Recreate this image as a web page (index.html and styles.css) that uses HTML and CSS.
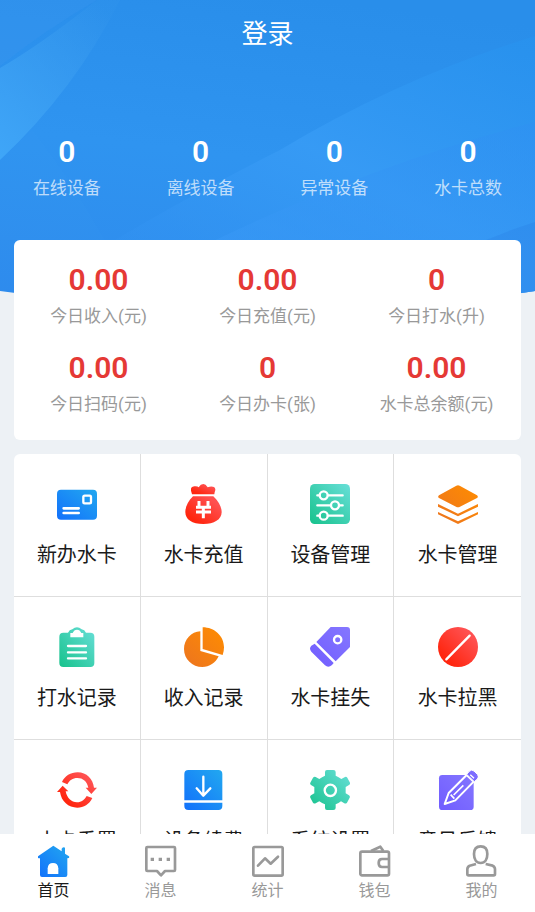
FILE: index.html
```
<!DOCTYPE html>
<html lang="zh-CN">
<head>
<meta charset="utf-8">
<meta name="viewport" content="width=device-width, initial-scale=1">
<title>首页</title>
<link rel="stylesheet" href="styles.css">
</head>
<body>
<svg class="defs" aria-hidden="true">
  <defs>
    <linearGradient id="blue" x1="0" y1="1" x2="1" y2="0"><stop offset="0" stop-color="#1270fb"/><stop offset="1" stop-color="#22a8f0"/></linearGradient>
    <linearGradient id="red" x1="0" y1="1" x2="1" y2="0"><stop offset="0.2" stop-color="#ff260f"/><stop offset="0.8" stop-color="#ff5050"/></linearGradient>
    <linearGradient id="green" x1="0" y1="1" x2="1" y2="0"><stop offset="0" stop-color="#17c28c"/><stop offset="1" stop-color="#68dfd8"/></linearGradient>
    <linearGradient id="orange" x1="0" y1="1" x2="1" y2="0"><stop offset="0" stop-color="#ec7420"/><stop offset="1" stop-color="#ff8d00"/></linearGradient>
    <linearGradient id="purple" x1="0" y1="1" x2="1" y2="0"><stop offset="0" stop-color="#705cff"/><stop offset="1" stop-color="#8577ff"/></linearGradient>
  </defs>
</svg>
<main class="page">
  <header class="hero">
    <svg class="hero-bg" viewBox="0 0 535 310" preserveAspectRatio="none" aria-hidden="true">
      <defs>
        <linearGradient id="sky" x1="0.6" y1="0" x2="0.4" y2="1"><stop offset="0" stop-color="#298eea"/><stop offset="0.5" stop-color="#2f94f0"/><stop offset="1" stop-color="#2e8bed"/></linearGradient>
        <linearGradient id="leaf" x1="0.8" y1="0" x2="0" y2="1"><stop offset="0" stop-color="#3f9fee" stop-opacity="0.1"/><stop offset="1" stop-color="#3fa6f8"/></linearGradient>
        <linearGradient id="wave" x1="1" y1="0" x2="0.2" y2="1"><stop offset="0" stop-color="#2793ef" stop-opacity="0.6"/><stop offset="0.5" stop-color="#379bf5" stop-opacity="0.9"/><stop offset="1" stop-color="#3292f2" stop-opacity="0.2"/></linearGradient>
        <linearGradient id="wave-low" x1="1" y1="0" x2="0.3" y2="1"><stop offset="0" stop-color="#2f90f2" stop-opacity="0.5"/><stop offset="1" stop-color="#3b9bf7" stop-opacity="0.5"/></linearGradient>
        <clipPath id="arc"><path d="M0 0H535V291Q268 330 0 291Z"/></clipPath>
      </defs>
      <g clip-path="url(#arc)">
        <path fill="url(#sky)" d="M0 0H535V320H0Z"/>
        <path fill="#4098ee" opacity="0.25" d="M0 0H97Q45 30 0 66Z"/>
        <path fill="url(#leaf)" d="M0 68Q40 45 97 0H120Q75 90 0 160Z"/>
        <path fill="#3d9af5" opacity="0.1" d="M0 160L32 130Q72 180 110 250H0Z"/>
        <path fill="url(#wave)" d="M535 36Q400 78 280 150Q190 195 115 240V320H535Z"/>
        <path fill="url(#wave-low)" d="M535 122Q370 165 205 245V320H535Z"/>
        <path fill="#287fe6" opacity="0.3" d="M535 222Q480 240 430 265V320H535Z"/>
      </g>
    </svg>
    <h1 class="title">登录</h1>
    <dl class="stats devices">
      <div class="stat"><dt>在线设备</dt><dd>0</dd></div>
      <div class="stat"><dt>离线设备</dt><dd>0</dd></div>
      <div class="stat"><dt>异常设备</dt><dd>0</dd></div>
      <div class="stat"><dt>水卡总数</dt><dd>0</dd></div>
    </dl>
  </header>

  <dl class="stats today">
    <div class="stat"><dt>今日收入(元)</dt><dd>0.00</dd></div>
    <div class="stat"><dt>今日充值(元)</dt><dd>0.00</dd></div>
    <div class="stat"><dt>今日打水(升)</dt><dd>0</dd></div>
    <div class="stat"><dt>今日扫码(元)</dt><dd>0.00</dd></div>
    <div class="stat"><dt>今日办卡(张)</dt><dd>0</dd></div>
    <div class="stat"><dt>水卡总余额(元)</dt><dd>0.00</dd></div>
  </dl>

  <nav class="menu" aria-label="功能">
    <a class="item" href="#new-card">
      <svg viewBox="0 0 120 120" aria-hidden="true"><rect y="17" width="120" height="90" rx="12" fill="url(#blue)"/><rect x="79" y="35" width="23" height="23" rx="4" fill="none" stroke="#fff" stroke-width="7"/><path d="M20 73H65M20 87H65" stroke="#fff" stroke-width="8" stroke-linecap="round"/></svg>
      新办水卡</a>
    <a class="item" href="#recharge">
      <svg viewBox="0 0 120 120" aria-hidden="true"><path fill="url(#red)" d="M24 31L21 20Q19 8 31 7Q41 6 44 10Q50 0 58 0Q65 0 71 10Q82 5 90 9Q97 14 92 25L91 31Z"/><path fill="url(#red)" d="M27 37H88C105 53 113 71 113 84C113 107 90 120 58 120C24 120 4 107 4 84C4 68 12 52 27 37Z"/><path d="M45 51V68M72 51V68M36 70H81M36 84H81M58 66V103" stroke="#fff" stroke-width="9" fill="none"/></svg>
      水卡充值</a>
    <a class="item" href="#devices">
      <svg viewBox="0 0 120 120" aria-hidden="true"><rect width="120" height="120" rx="14" fill="url(#green)"/><g fill="none" stroke="#fff" stroke-width="7" stroke-linecap="round"><path d="M22 34H29M54 34H98M22 64H62M88 64H98M22 95H29M54 95H98"/><circle cx="41" cy="34" r="12"/><circle cx="75" cy="64" r="12"/><circle cx="41" cy="95" r="12"/></g></svg>
      设备管理</a>
    <a class="item" href="#cards">
      <svg viewBox="0 0 120 120" aria-hidden="true"><path fill="url(#orange)" d="M55 5Q60 2 65 5L117 34Q122 38 117 42L66 68Q60 71 54 68L3 42Q-2 38 3 34ZM0 60L60 89L120 60V68L60 97L0 68ZM0 84L60 112L120 84V91L60 120L0 91Z"/></svg>
      水卡管理</a>
    <a class="item" href="#water-log">
      <svg viewBox="0 0 120 120" aria-hidden="true"><path fill="url(#green)" d="M19 17H33Q37 8 46 7Q60-6 74 7Q83 8 87 17H100Q112 17 112 29V108Q112 120 100 120H19Q7 120 7 108V29Q7 17 19 17Z"/><path fill="#fff" d="M40 18H47Q51 8 60 8Q69 8 73 18H79V31H40Z"/><path d="M33 57H87M33 76H87M33 94H87" stroke="#fff" stroke-width="7" stroke-linecap="round"/></svg>
      打水记录</a>
    <a class="item" href="#income-log">
      <svg viewBox="0 0 120 120" aria-hidden="true"><path fill="url(#orange)" d="M49 13V72L104 88C95 108 76 120 55 120C25 120 0 97 0 66C0 38 22 14 49 13ZM56 1C91 1 120 27 120 61Q120 73 116 84L56 66Z"/></svg>
      收入记录</a>
    <a class="item" href="#report-loss">
      <svg viewBox="0 0 120 120" aria-hidden="true"><path fill="url(#purple)" d="M62 0H111Q120 0 120 9V60L77 103L19 45ZM14 50L71 108L66 114Q55 124 45 115L4 74Q-4 64 4 56Z"/><circle cx="83" cy="38" r="11" fill="none" stroke="#fff" stroke-width="7"/></svg>
      水卡挂失</a>
    <a class="item" href="#block">
      <svg viewBox="0 0 120 120" aria-hidden="true"><circle cx="60" cy="60" r="60" fill="url(#red)"/><path d="M25 97L95 26" stroke="#fff" stroke-width="7" stroke-linecap="round"/></svg>
      水卡拉黑</a>
    <a class="item" href="#reset">
      <svg viewBox="0 0 120 120" aria-hidden="true"><path fill="url(#red)" d="M15 36C23 18 41 7 62 7C89 7 108 27 111 53H120L103 72L86 53H94C90 34 78 24 61 24C47 24 37 31 31 43ZM106 84C97 103 80 113 61 113C34 113 13 94 9 66H0L17 47L34 64H26C30 84 43 97 60 97C74 97 83 89 89 78Z"/></svg>
      水卡重置</a>
    <a class="item" href="#renew">
      <svg viewBox="0 0 120 120" aria-hidden="true"><path fill="url(#blue)" d="M13 0H103Q115 0 115 12V91H1V12Q1 0 13 0ZM1 98H115V108Q115 120 103 120H13Q1 120 1 108Z"/><path d="M58 20V76M38 55L58 77L79 55" fill="none" stroke="#fff" stroke-width="7" stroke-linecap="round" stroke-linejoin="round"/></svg>
      设备续费</a>
    <a class="item" href="#settings">
      <svg viewBox="0 0 120 120" aria-hidden="true"><path fill="url(#green)" d="M45 6Q45 0 51 0H70Q77 0 77 6V17Q86 21 94 27L105 21Q109 19 112 23L120 38Q121 42 117 45L107 51V70L117 76Q121 79 119 83L111 98Q107 102 103 100L93 94Q86 100 77 103V114Q77 120 70 120H51Q45 120 45 114V103Q36 100 28 94L17 100Q13 102 9 98L1 83Q-1 79 3 76L13 70V51L3 45Q-1 42 1 38L9 23Q13 19 17 21L28 27Q36 21 45 17Z"/><circle cx="61" cy="61" r="17" fill="none" stroke="#fff" stroke-width="7"/></svg>
      系统设置</a>
    <a class="item" href="#feedback">
      <svg viewBox="0 0 120 120" aria-hidden="true"><rect x="3" y="15" width="104" height="105" rx="10" fill="url(#purple)"/><path d="M20 102L32 69L86 15L107 35L52 91Z" fill="url(#purple)" stroke="#fff" stroke-width="6" stroke-linejoin="round"/><path d="M38 74L49 86M47 75L76 46" fill="none" stroke="#fff" stroke-width="5"/><path fill="url(#purple)" stroke="#fff" stroke-width="3" d="M86 13L94 4Q101-3 108 3L119 14Q124 21 118 27L109 35Z"/><path d="M97 14L108 25" stroke="#fff" stroke-width="4"/></svg>
      意见反馈</a>
  </nav>
</main>

<nav class="tabs" aria-label="主导航">
  <a class="tab active" href="#home" aria-current="page">
    <svg viewBox="0 0 96 96" aria-hidden="true"><path fill="url(#blue)" d="M46 2L71 19V11Q76 5 81 8V26L93 34Q96 40 88 40V90Q88 96 82 96H12Q6 96 6 90V40Q-4 40 0 34Z"/><path fill="#fff" d="M29 87V70Q30 54 45 54Q60 54 61 70V87Z"/></svg>
    首页</a>
  <a class="tab" href="#messages">
    <svg viewBox="0 0 96 96" aria-hidden="true"><path class="line" d="M7 6H87Q90 6 90 9V75Q90 78 87 78H60L48 91L36 78H7Q4 78 4 75V9Q4 6 7 6Z"/><path fill="#999" d="M17 38H27V48H17ZM41 38H51V48H41ZM65 38H75V48H65Z"/></svg>
    消息</a>
  <a class="tab" href="#statistics">
    <svg viewBox="0 0 96 96" aria-hidden="true"><rect class="line" x="4" y="6" width="88" height="86" rx="4"/><path class="line" stroke-linecap="round" d="M18 62L39 40L56 56L78 35"/></svg>
    统计</a>
  <a class="tab" href="#wallet">
    <svg viewBox="0 0 96 96" aria-hidden="true"><rect class="line" x="4" y="20" width="86" height="71" rx="5"/><path class="line" d="M36 18L64 5L73 18M90 42H69Q59 42 59 54Q59 66 69 66H90"/></svg>
    钱包</a>
  <a class="tab" href="#mine">
    <svg viewBox="0 0 96 96" aria-hidden="true"><path class="line" d="M44 4C57 4 64 12 64 27C64 43 57 54 44 54C31 54 24 43 24 27C24 12 31 4 44 4ZM30 57L11 62Q4 65 4 73V87Q4 91 8 91H83Q87 91 87 87V73Q87 65 80 62L59 57"/></svg>
    我的</a>
</nav>
</body>
</html>
```
FILE: styles.css
```
* {
  box-sizing: border-box;
}

body {
  display: flex;
  flex-direction: column;
  height: 100vh;
  margin: 0;
  background: #edf1f5;
  color: #1a1a1a;
  font-family: Roboto, "Noto Sans CJK SC", sans-serif;
}

a {
  color: inherit;
  text-decoration: none;
}

dl,
dd,
h1 {
  margin: 0;
}

.defs {
  position: absolute;
  width: 0;
  height: 0;
}

.page {
  flex: 1;
  min-height: 0;
  overflow-y: auto;
  scrollbar-width: none;
}

.hero {
  position: relative;
  height: 240px;
  color: #fff;
}

.hero-bg {
  position: absolute;
  top: 0;
  left: 0;
  width: 100%;
  height: 310px;
}

.title {
  position: relative;
  font-size: 26px;
  font-weight: 400;
  line-height: 68px;
  text-align: center;
}

.stats {
  position: relative;
  display: grid;
}

.stat {
  display: flex;
  flex-direction: column-reverse;
  align-items: center;
}

.stat dt {
  font-size: 17px;
  line-height: 32px;
}

.stat dd {
  font-size: 30px;
  font-weight: 600;
  line-height: 40px;
}

.devices {
  grid-template-columns: repeat(4, 1fr);
  padding-top: 64px;
}

.devices dt {
  color: rgba(255, 255, 255, 0.7);
}

.today {
  grid-template-columns: repeat(3, 1fr);
  gap: 16px 0;
  margin: 0 14px;
  padding: 20px 0;
  border-radius: 6px;
  background: #fff;
}

.today dt {
  color: #999;
}

.today dd {
  color: #e53935;
}

.menu {
  display: grid;
  grid-template-columns: repeat(4, 1fr);
  margin: 14px 14px 0;
  border-radius: 6px;
  background: #fff;
  overflow: hidden;
}

.item {
  display: flex;
  flex-direction: column;
  align-items: center;
  gap: 15px;
  height: 143px;
  padding-top: 30px;
  border-right: 1px solid #dedede;
  border-bottom: 1px solid #dedede;
  font-size: 20px;
  line-height: 32px;
}

.item:nth-child(4n) {
  border-right: 0;
}

.item svg {
  width: 40px;
  height: 40px;
}

.tabs {
  display: grid;
  grid-template-columns: repeat(5, 1fr);
  height: 78px;
  background: #fff;
}

.tab {
  display: flex;
  flex-direction: column;
  align-items: center;
  padding-top: 11px;
  color: #999;
  font-size: 16px;
  line-height: 28px;
}

.tab.active {
  color: #1a1a1a;
}

.tab svg {
  width: 32px;
  height: 32px;
}

.line {
  fill: none;
  stroke: #999;
  stroke-width: 8;
  stroke-linejoin: round;
}
```
